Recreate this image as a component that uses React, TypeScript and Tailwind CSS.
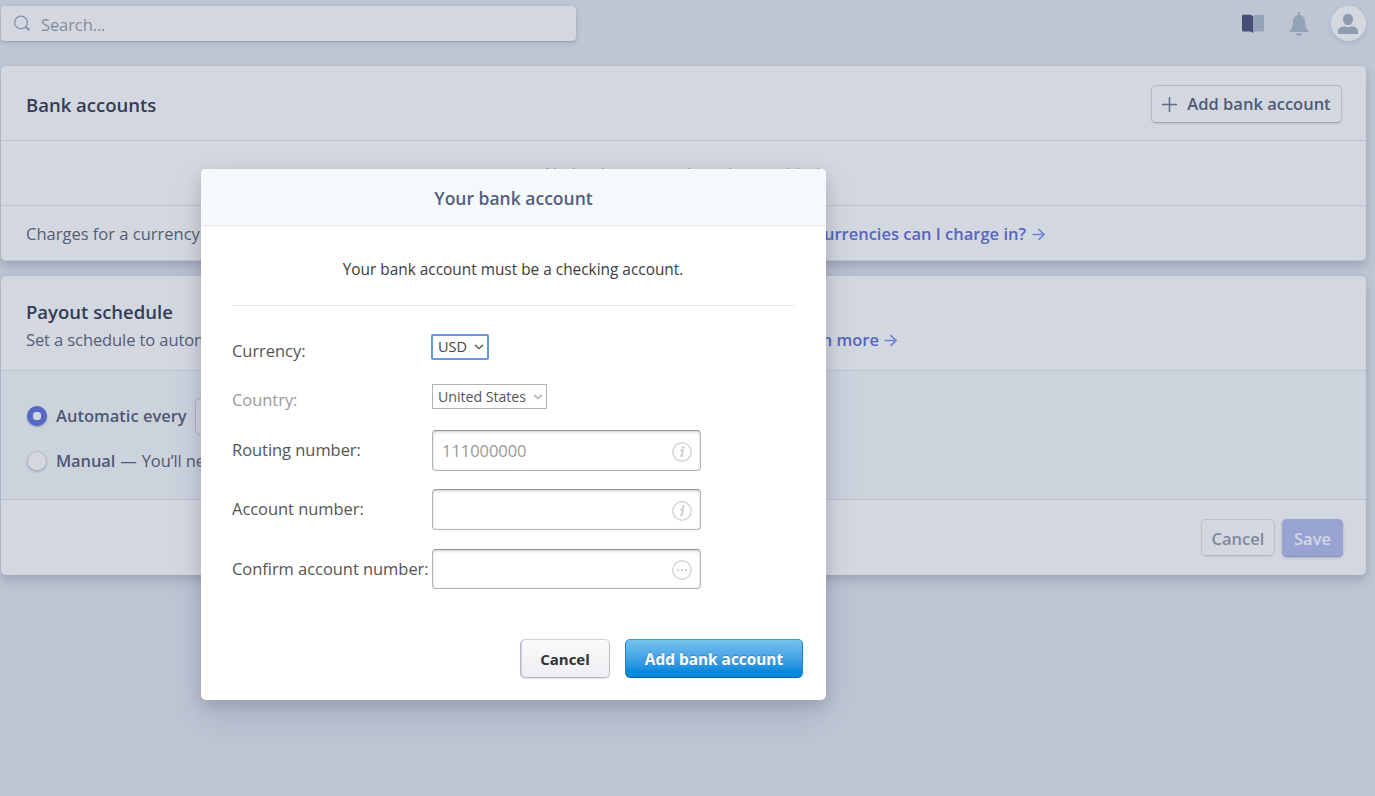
import type { ReactNode } from 'react';

function SearchIcon() {
  return (
    <svg width="18" height="18" viewBox="0 0 18 18" fill="none" stroke="#8391a8" strokeWidth="1.3">
      <circle cx="8" cy="7.4" r="6.3" />
      <path d="M12.4 11.8 16.4 15.2" strokeWidth="2" />
    </svg>
  );
}

function BookIcon() {
  return (
    <svg width="22" height="20" viewBox="0 0 22 20">
      <path d="M0 2Q0 .8 1.2.8H8Q10 .8 11 2.4V19Q10 17.4 8 17.4H1.2Q0 17.4 0 16.2Z" fill="#464d77" />
      <path d="M22 2Q22 .8 20.8.8H14Q12 .8 11 2.4V19Q12 17.4 14 17.4H20.8Q22 17.4 22 16.2Z" fill="#94a2b6" />
    </svg>
  );
}

function BellIcon() {
  return (
    <svg width="20" height="24" viewBox="0 0 20 24" fill="#94a2b6">
      <path d="M10 0a1 1 0 0 1 1 1v1.9C14.3 3.4 16 6 16 9.3c0 5 .8 7 3 9.2.6.7.3 1.5-.6 1.5H1.6C.7 20 .4 19.2 1 18.5 3.2 16.3 4 14.3 4 9.3 4 6 5.7 3.4 9 2.9V1a1 1 0 0 1 1-1Z" />
      <path d="M6.800 21.200h6.400Q12.500 23.800 10 23.800T6.800 21.200Z" />
    </svg>
  );
}

function UserIcon() {
  return (
    <svg width="20" height="20" viewBox="0 0 20 20" fill="#8f9bb0">
      <path d="M10 0c3 0 5 2 5 5.200S13 11.200 10 11.200 5 8.400 5 5.200 7 0 10 0Z" />
      <path d="M0 17.300C0 14 3 12.700 6.600 12.200Q10 14.400 13.400 12.200C17 12.700 20 14 20 17.300V18.800Q20 20 18.800 20H1.200Q0 20 0 18.800Z" />
    </svg>
  );
}

function ArrowIcon() {
  return (
    <svg width="13" height="13" viewBox="0 0 13 13" fill="none" stroke="#6d83d3" strokeWidth="1.6">
      <path d="M.5 6.500H12M6.500 1.200 12 6.500 6.500 11.800" />
    </svg>
  );
}

function Chevron({ className }: { className: string }) {
  return (
    <svg width="10" height="6" viewBox="0 0 10 6" fill="none" className={className}>
      <path d="M1 .9 5 4.5 9 .9" stroke="currentColor" strokeWidth="1.6" />
    </svg>
  );
}

function InfoIcon() {
  return (
    <svg width="20" height="20" viewBox="0 0 20 20">
      <circle cx="10" cy="10" r="9.2" fill="none" stroke="#d6d6d6" strokeWidth="1.5" />
      <path d="M8.300 8.300h2.600L9.800 13.700h1M8.100 14h2.700" fill="none" stroke="#c8c8c8" strokeWidth="1.6" />
      <circle cx="11.2" cy="5.6" r="1.300" fill="#c8c8c8" />
    </svg>
  );
}

function DotsIcon() {
  return (
    <svg width="20" height="20" viewBox="0 0 20 20" fill="#d0d0d0">
      <circle cx="10" cy="10" r="9.2" fill="none" stroke="#d6d6d6" strokeWidth="1.5" />
      <path d="M5 9h2.200v2H5zM8.900 9h2.200v2H8.900zM12.800 9H15v2h-2.200z" />
    </svg>
  );
}

function Field({ label, children, className }: { label: string; children: ReactNode; className: string }) {
  return (
    <div className={`flex items-start ${className}`}>
      <div className="w-[200px] shrink-0 leading-6 whitespace-nowrap">{label}</div>
      {children}
    </div>
  );
}

function TextInput({ value, icon, className }: { value?: string; icon: ReactNode; className: string }) {
  return (
    <div className={`flex w-[269px] items-center justify-between rounded-[4px] border border-[#b5b5b5] border-t-[#949494] bg-white pr-2 pl-[9px] shadow-[inset_0_1px_3px_rgba(0,0,0,0.2)] ${className}`}>
      <span className="pt-[2px] text-[16.5px] text-[#999]">{value}</span>
      <span className="pt-[2px]">{icon}</span>
    </div>
  );
}

const card = 'flex flex-col rounded-[5px] bg-[#d3d8e0] shadow-[0_7px_14px_rgba(60,80,110,0.13),0_3px_6px_rgba(30,40,60,0.12)]';

function Dashboard() {
  return (
    <div className="flex h-full flex-col pr-[9px] pl-px">
      <header className="flex h-[66px] items-start justify-between pt-[6px]">
        <div className="flex h-[35px] w-[575px] items-center rounded-[4px] bg-[#d3d8e0] pl-3 shadow-[0_2px_5px_rgba(60,66,110,0.15),0_1px_2px_rgba(30,40,60,0.15)]">
          <SearchIcon />
          <span className="pt-[3px] pl-[10px] tracking-[-0.1px] text-[#838c9f]">Search...</span>
        </div>
        <div className="flex items-center">
          <BookIcon />
          <div className="ml-[25px]"><BellIcon /></div>
          <div className="ml-[22px] flex size-[35px] items-center justify-center rounded-full bg-[#d3d8e0] pr-px shadow-[0_2px_4px_rgba(60,66,110,0.15)]">
            <UserIcon />
          </div>
        </div>
      </header>

      <section className={`h-[195px] shrink-0 ${card}`}>
        <div className="flex h-[75px] items-center justify-between border-b border-[#bdc4d2] pr-6 pl-[25px]">
          <h2 className="pt-1 text-[18.5px] font-semibold text-[#333c55]">Bank accounts</h2>
          <button className="mt-px flex h-[38px] w-[191px] items-center justify-center gap-[10px] rounded-[5px] border border-[#b4bac8] border-b-[#9ba3b5] pt-[2px] font-semibold text-[#4f5b76] shadow-[0_1px_2px_rgba(60,66,110,0.15)]">
            <svg width="15" height="15" viewBox="0 0 15 15" stroke="#5f6c85" strokeWidth="1.5"><path d="M0 7.500H15M7.500 0V15" /></svg>
            Add bank account
          </button>
        </div>
        <div className="flex h-[65px] items-center justify-center border-b border-[#bdc4d2] pt-[2px] pl-[2px] text-[#8b95a9]">No bank accounts have been added.</div>
        <div className="flex flex-1 items-center overflow-hidden rounded-b-[5px] border-b border-[#bdc4d2] pt-[3px] pl-[25px] whitespace-nowrap text-[#535d76]">
          <span className="w-[766px] overflow-hidden">Charges for a currency without a bank account will be converted to your default currency.</span>
          <a className="flex items-center gap-[6px] font-semibold text-[#5765bf]"><span className="flex w-[234px] justify-end">Which currencies can I charge in?</span><ArrowIcon /></a>
        </div>
      </section>

      <section className={`mt-[15px] h-[299px] shrink-0 ${card}`}>
        <div className="h-[95px] border-b border-[#bdc4d2] pt-[22px] pl-[25px]">
          <h2 className="text-[18.5px] leading-7 font-semibold text-[#333c55]">Payout schedule</h2>
          <div className="flex items-center leading-7 whitespace-nowrap text-[#535d76]">
            <span className="w-[740px] overflow-hidden tracking-[-0.1px]">Set a schedule to automatically send earnings to your bank account, or send manually via the API.</span>
            <a className="flex items-center gap-[5px] font-semibold text-[#5765bf]"><span className="flex w-[113px] justify-end">Learn more</span><ArrowIcon /></a>
          </div>
        </div>
        <div className="flex h-[129px] flex-col border-b border-[#bdc4d2] bg-[#ccd3dd] pt-6 pl-[26px] text-[#4f5972]">
          <div className="flex h-[42px] items-center">
            <span className="flex size-5 items-center justify-center rounded-full bg-[#5469c3] shadow-[0_1px_2px_rgba(40,50,110,0.4)]"><i className="size-2 rounded-[3px] bg-[#d3d8e0]" /></span>
            <span className="pl-[9px] font-semibold">Automatic every</span>
            <span className="ml-2 h-[37px] w-24 rounded-[5px] border border-[#adb4c3] bg-[#d3d8e0]" />
          </div>
          <div className="mt-[3px] flex h-[42px] items-center whitespace-nowrap">
            <span className="size-5 rounded-full border border-[#b3bac8] bg-[#d3d8e0] shadow-[0_1px_2px_rgba(60,66,110,0.3)]" />
            <span className="pl-[9px] font-semibold tracking-[-0.1px]">Manual</span>
            <span className="pl-[5px] tracking-[-0.1px]">—</span>
            <span className="pl-[5px] tracking-[-0.1px]">You’ll need to send payouts yourself</span>
          </div>
        </div>
        <div className="flex flex-1 items-center justify-end gap-[7px] pr-[23px]">
          <button className="flex h-[37px] w-[74px] items-center justify-center rounded-[5px] border border-[#bcc2cf] border-b-[#b0b7c6] pt-[3px] font-semibold text-[#7e889d] shadow-[0_1px_2px_rgba(60,66,110,0.1)]">Cancel</button>
          <button className="flex h-[38px] w-[61px] items-center justify-center rounded-[5px] bg-[#98a3d3] pt-[3px] font-semibold text-[#d3d8e6] shadow-[inset_0_-1px_0_#8791c0,0_1px_3px_rgba(60,66,110,0.25)]">Save</button>
        </div>
      </section>
    </div>
  );
}

function BankAccountDialog() {
  return (
    <div role="dialog" className="absolute top-[169px] left-[201px] flex h-[531px] w-[625px] flex-col overflow-hidden rounded-[5px] bg-white shadow-[0_15px_35px_rgba(50,50,93,0.15),0_5px_15px_rgba(0,0,0,0.12)]">
      <div className="flex h-[57px] shrink-0 items-center justify-center border-b border-[#e3e8ee] bg-[#f6f9fc] pt-[2px] text-[17.5px] font-semibold text-[#525f7f]">Your bank account</div>
      <div className="mr-8 ml-[31px] flex h-[80px] shrink-0 items-center justify-center border-b border-[#e6e6e6] pt-[8px] text-[15.4px] text-[#3c3c3c]">
        Your bank account must be a checking account.
      </div>
      <div className="ml-[31px] flex flex-col text-[16.5px] tracking-[-0.05px] text-[#555]">
        <Field label="Currency:" className="mt-[33px]">
          <div className="mt-[-5px] -ml-px flex h-[26px] w-[58px] items-center justify-between rounded-[2px] border-2 border-[#6497e8] pr-[3px] pl-[5px] text-[14.5px] text-[#444]">
            <span>USD</span>
            <Chevron className="text-[#666]" />
          </div>
        </Field>
        <Field label="Country:" className="mt-[25px] text-[#999]">
          <div className="mt-[-4px] flex h-[25px] w-[115px] items-center justify-between border border-[#b3b3b3] pr-[3px] pl-[5px] text-[14.2px] text-[#555]">
            <span>United States</span>
            <Chevron className="text-[#b5b5b5]" />
          </div>
        </Field>
        <Field label="Routing number:" className="mt-[26px]">
          <TextInput value="111000000" icon={<InfoIcon />} className="mt-[-8px] h-[41px]" />
        </Field>
        <Field label="Account number:" className="mt-[26px]">
          <TextInput icon={<InfoIcon />} className="mt-[-8px] h-[41px]" />
        </Field>
        <Field label="Confirm account number:" className="mt-[27px]">
          <TextInput icon={<DotsIcon />} className="mt-[-8px] h-10" />
        </Field>
      </div>
      <div className="mt-[50px] flex justify-end gap-[15px] pr-[23px]">
        <button className="flex h-[39px] w-[90px] items-center justify-center rounded-[5px] border border-[#b9bcc6] border-t-[#d0d2d8] border-l-[#b9bcc6] bg-linear-to-b from-[#fafafb] to-[#edeef2] pt-[2px] text-[15px] font-bold text-[#333] shadow-[inset_1px_0_0_#c9ccd4,0_1px_1px_rgba(0,0,0,0.12)]">Cancel</button>
        <button className="flex h-[39px] w-[178px] items-center justify-center rounded-[5px] border border-[#1f86c9] border-t-[#3d9bd8] border-b-[#0e5f99] bg-linear-to-b from-[#76c3ef] to-[#0489dc] to-85% pt-[2px] text-[15.4px] font-bold text-white [text-shadow:0_-1px_0_rgba(0,0,0,0.2)]">Add bank account</button>
      </div>
    </div>
  );
}

export default function App() {
  return (
    <div className="relative h-[796px] w-[1375px] overflow-hidden bg-[#bec5d3] font-['Open_Sans',sans-serif] text-[16.5px]">
      <Dashboard />
      <BankAccountDialog />
    </div>
  );
}
